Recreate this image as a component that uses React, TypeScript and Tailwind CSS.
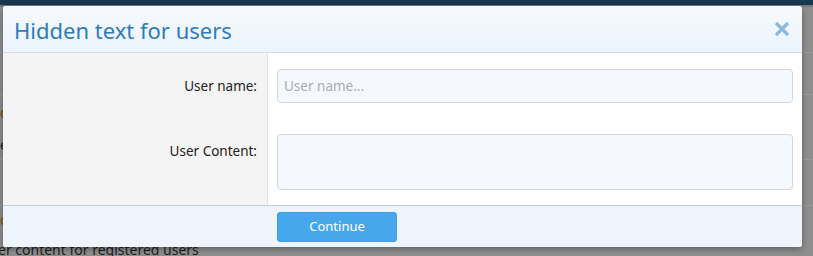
import React from "react";

const font = { fontFamily: '"Segoe UI", "Noto Sans", "Open Sans", sans-serif' };

export default function App() {
  return (
    <div
      className="relative h-[256px] w-[813px] overflow-hidden bg-[#8e8e8e]"
      style={font}
    >
      {/* page behind the dimmed overlay */}
      <div className="flex h-full flex-col text-[14px]">
        <div className="h-[5px] shrink-0 bg-[#163850]" />
        <div className="h-[2px] shrink-0 bg-[#7a7a7a]" />
        <div className="h-[46px] shrink-0 border-b border-[#9a9a9a]" />
        <div className="h-[42px] shrink-0 border-b border-[#9a9a9a]" />
        <div className="flex h-[34px] shrink-0 items-center text-[#7a4a12]">d</div>
        <div className="flex h-[31px] shrink-0 items-center border-b border-[#9a9a9a] text-[#1e1e1e]">
          e
        </div>
        <div className="h-[46px] shrink-0 border-b border-[#9a9a9a]" />
        <div className="flex h-[26px] shrink-0 items-center text-[#7a4a12]">d</div>
        <div className="-ml-[2px] shrink-0 whitespace-nowrap pt-[10px] leading-[16px] text-[#1e1e1e]">
          er content for registered users
        </div>
      </div>

      {/* dialog */}
      <div className="absolute left-[3px] top-[6px] flex h-[241px] w-[799px] flex-col overflow-hidden rounded-[3px] bg-white shadow-[0_2px_6px_rgba(0,0,0,0.35)]">
        <div className="flex h-[47px] items-center justify-between border-b border-[#d8dde3] bg-gradient-to-b from-[#f7fafd] to-[#ebf3fc] pl-[11px] pr-[10px]">
          <h2 className="translate-y-[1px] text-[22px] font-normal leading-none text-[#2f7cb8]">
            Hidden text for users
          </h2>
          <svg width="16" height="16" viewBox="0 0 16 16" className="mr-[2px]">
            <path
              d="M2 2 L14 14 M14 2 L2 14"
              stroke="#8bb8dc"
              strokeWidth="3.2"
              strokeLinecap="butt"
            />
          </svg>
        </div>

        <div className="flex flex-1">
          <div className="flex w-[265px] flex-col border-r border-[#e2e2e2] bg-[#f4f4f4] pr-[10px] text-right text-[13.5px] text-[#222]">
            <div className="mt-[16px] flex h-[34px] items-center justify-end">User name:</div>
            <div className="mt-[31px] flex h-[34px] items-center justify-end">User Content:</div>
          </div>
          <div className="flex flex-1 flex-col gap-[31px] pl-[9px] pr-[9px] pt-[16px]">
            <input
              placeholder="User name..."
              className="h-[34px] w-full rounded-[4px] border border-[#d3d6d9] bg-[#f5f9fd] px-[6px] text-[13.5px] text-[#222] placeholder:text-[#a9adb2] outline-none"
            />
            <textarea className="h-[56px] w-full resize-none rounded-[4px] border border-[#d3d6d9] bg-[#f5f9fd] px-[6px] text-[13.5px] outline-none" />
          </div>
        </div>

        <div className="flex h-[42px] items-center border-t border-[#c9cdd1] bg-[#edf4fc] pl-[274px]">
          <button className="h-[30px] w-[120px] rounded-[3px] border border-[#3f9fe3] bg-[#47a7eb] text-[13px] text-white">
            Continue
          </button>
        </div>
      </div>
    </div>
  );
}
